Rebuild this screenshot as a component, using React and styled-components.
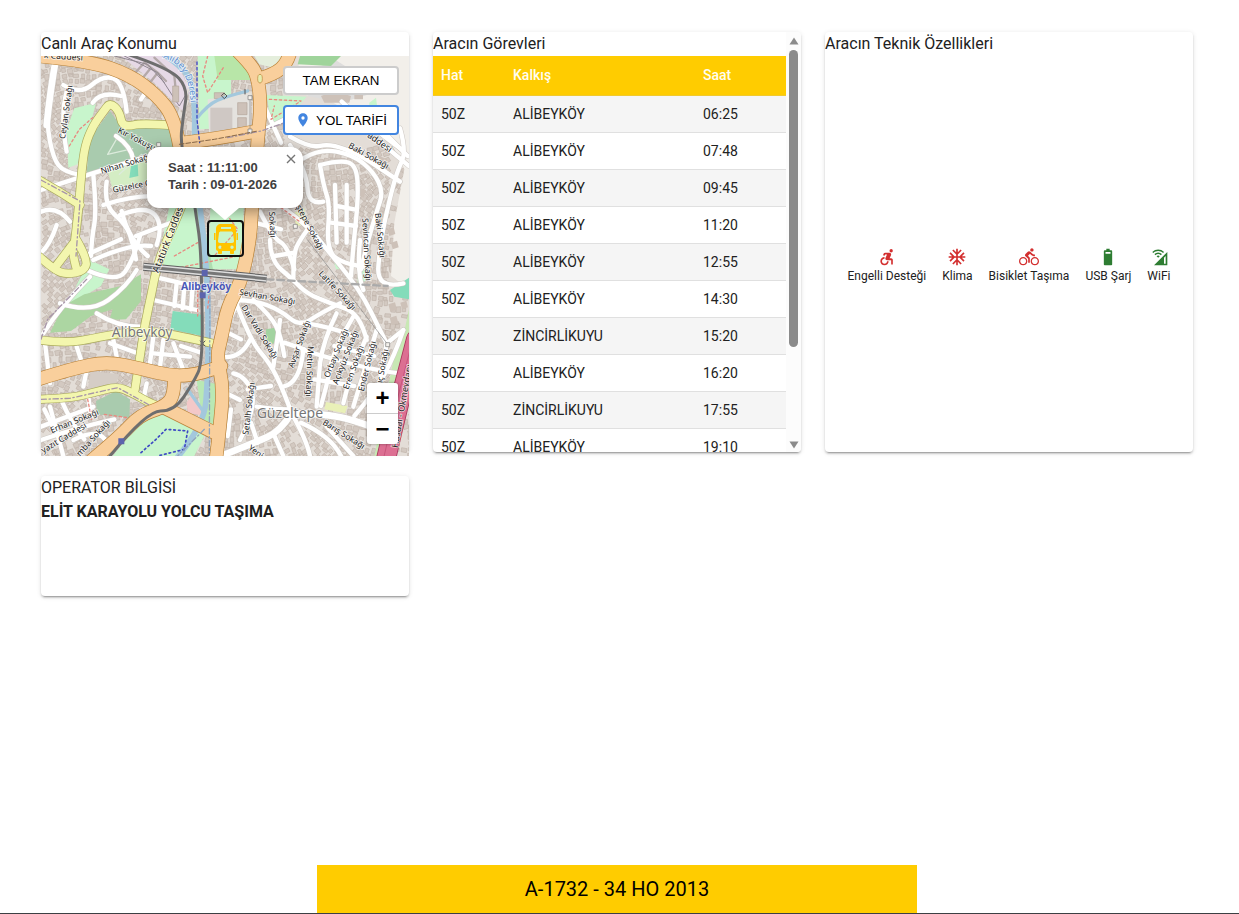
import React from "react";
import styled, { createGlobalStyle } from "styled-components";
import {
    MdAccessibleForward,
    MdAcUnit,
    MdDirectionsBike,
    MdBattery6Bar,
    MdCellWifi,
    MdLocationOn,
} from "react-icons/md";

const GlobalStyle = createGlobalStyle`
    * {
        box-sizing: border-box;
    }

    body {
        margin: 0;
        background: #fff;
        color: #212121;
        font-family: Roboto, "Liberation Sans", sans-serif;
        font-size: 16px;
        line-height: 24px;
    }
`;

const gorevler = [
    { hat: "50Z", kalkis: "ALİBEYKÖY", saat: "06:25" },
    { hat: "50Z", kalkis: "ALİBEYKÖY", saat: "07:48" },
    { hat: "50Z", kalkis: "ALİBEYKÖY", saat: "09:45" },
    { hat: "50Z", kalkis: "ALİBEYKÖY", saat: "11:20" },
    { hat: "50Z", kalkis: "ALİBEYKÖY", saat: "12:55" },
    { hat: "50Z", kalkis: "ALİBEYKÖY", saat: "14:30" },
    { hat: "50Z", kalkis: "ZİNCİRLİKUYU", saat: "15:20" },
    { hat: "50Z", kalkis: "ALİBEYKÖY", saat: "16:20" },
    { hat: "50Z", kalkis: "ZİNCİRLİKUYU", saat: "17:55" },
    { hat: "50Z", kalkis: "ALİBEYKÖY", saat: "19:10" },
];

const ozellikler = [
    { ad: "Engelli Desteği", icon: MdAccessibleForward, aktif: false },
    { ad: "Klima", icon: MdAcUnit, aktif: false },
    { ad: "Bisiklet Taşıma", icon: MdDirectionsBike, aktif: false },
    { ad: "USB Şarj", icon: MdBattery6Bar, aktif: true },
    { ad: "WiFi", icon: MdCellWifi, aktif: true },
];

function App() {
    return (
        <>
            <GlobalStyle />
            <StyledPage>
                <StyledGrid>
                    <Card>
                        <CardTitle>Canlı Araç Konumu</CardTitle>
                        <Harita />
                    </Card>
                    <Card>
                        <Gorevler />
                    </Card>
                    <Card>
                        <CardTitle>Aracın Teknik Özellikleri</CardTitle>
                        <Ozellikler />
                    </Card>
                    <Card $short>
                        <CardTitle>OPERATOR BİLGİSİ</CardTitle>
                        <Operator>ELİT KARAYOLU YOLCU TAŞIMA</Operator>
                    </Card>
                </StyledGrid>
                <StyledFooter>
                    <Plaka>A-1732 - 34 HO 2013</Plaka>
                </StyledFooter>
            </StyledPage>
        </>
    )
};

export default App

const StyledPage = styled.div`
    display: flex;
    flex-direction: column;
    min-height: 100vh;
`;

const StyledGrid = styled.main`
    display: grid;
    grid-template-columns: repeat(3, minmax(0, 1fr));
    align-items: start;
    gap: 24px;
    padding: 32px 46px 24px 41px;
`;

const Card = styled.section`
    display: flex;
    flex-direction: column;
    height: ${({ $short }) => ($short ? "120px" : "420px")};
    border-radius: 4px;
    background: #fff;
    box-shadow: 0 3px 1px -2px rgba(0, 0, 0, 0.2), 0 2px 2px 0 rgba(0, 0, 0, 0.14), 0 1px 5px 0 rgba(0, 0, 0, 0.12);
`;

const CardTitle = styled.h2`
    margin: 0;
    font-size: 16px;
    font-weight: 400;
    line-height: 24px;
`;

const Operator = styled.strong`
    font-weight: 700;
`;

const StyledFooter = styled.footer`
    display: flex;
    justify-content: center;
    margin-top: auto;
    padding-right: 5px;
    border-bottom: 1px solid #3c4043;
`;

const Plaka = styled.div`
    width: 600px;
    max-width: 100%;
    padding: 12px 16px;
    background: #ffcc00;
    color: #000;
    font-size: 20px;
    text-align: center;
`;

const StyledGorevler = styled.div`
    display: flex;
    height: 100%;
    overflow: hidden;
    border-radius: 4px;

    .content {
        flex: 1;
        min-width: 0;
    }
`;

const Table = styled.table`
    width: 100%;
    table-layout: fixed;
    border-collapse: separate;
    border-spacing: 0;
    font-size: 14px;
    line-height: 20px;

    th, td {
        padding: 8px;
        border-bottom: 1px solid #e0e0e0;
        text-align: left;
    }

    th {
        border-bottom-color: #f0c92f;
        background: #ffcc00;
        color: #fffdf0;
        font-weight: 500;
        line-height: 23px;
    }

    th:first-child {
        width: 72px;
    }

    th:last-child {
        width: 91px;
    }

    tbody tr:nth-child(odd) {
        background: #f5f5f5;
    }
`;

const ScrollBar = styled.div`
    display: flex;
    flex-direction: column;
    align-items: center;
    justify-content: space-between;
    width: 15px;
    padding: 5px 0 3px;
    background: #fcfcfc;

    .track {
        flex: 1;
        padding: 5px 0;
    }

    .thumb {
        width: 9px;
        height: 77%;
        border-radius: 5px;
        background: #8b8b8b;
    }
`;

function Gorevler() {
    return (
        <StyledGorevler>
            <div className="content">
                <CardTitle>Aracın Görevleri</CardTitle>
                <Table>
                    <thead>
                        <tr>
                            <th>Hat</th>
                            <th>Kalkış</th>
                            <th>Saat</th>
                        </tr>
                    </thead>
                    <tbody>
                        {gorevler.map((gorev) => (
                            <tr key={gorev.saat}>
                                <td>{gorev.hat}</td>
                                <td>{gorev.kalkis}</td>
                                <td>{gorev.saat}</td>
                            </tr>
                        ))}
                    </tbody>
                </Table>
            </div>
            <ScrollBar aria-hidden="true">
                <svg width="10" height="8" viewBox="0 0 10 8">
                    <path d="M5 0.5 9.5 7.5H0.5Z" fill="#8b8b8b" />
                </svg>
                <div className="track">
                    <div className="thumb" />
                </div>
                <svg width="10" height="8" viewBox="0 0 10 8">
                    <path d="M5 7.5 9.5 0.5H0.5Z" fill="#8b8b8b" />
                </svg>
            </ScrollBar>
        </StyledGorevler>
    )
};

const StyledOzellikler = styled.ul`
    display: flex;
    flex: 1;
    align-items: center;
    justify-content: center;
    gap: 16px;
    margin: 0;
    padding: 24px 0 0;
    list-style: none;
`;

const Ozellik = styled.li`
    display: flex;
    flex-direction: column;
    align-items: center;
    font-size: 12px;
    line-height: 18px;
    white-space: nowrap;

    svg {
        width: 20px;
        height: 20px;
        color: ${({ $aktif }) => ($aktif ? "#2e7d32" : "#d32f2f")};
    }
`;

function Ozellikler() {
    return (
        <StyledOzellikler>
            {ozellikler.map(({ ad, icon: Icon, aktif }) => (
                <Ozellik key={ad} $aktif={aktif}>
                    <Icon />
                    <span>{ad}</span>
                </Ozellik>
            ))}
        </StyledOzellikler>
    )
};

const StyledHarita = styled.div`
    position: relative;
    flex: none;
    height: 400px;
    overflow: hidden;
    background: #ebe6e0;
    font-family: "Liberation Sans", Arial, sans-serif;

    .map {
        display: block;
        width: 100%;
        height: 100%;
    }
`;

const MapActions = styled.div`
    position: absolute;
    top: 10px;
    right: 10px;
    display: flex;
    flex-direction: column;
    gap: 10px;
`;

const MapButton = styled.button`
    display: flex;
    align-items: center;
    justify-content: center;
    gap: 5px;
    width: 116px;
    height: ${({ $primary }) => ($primary ? "30px" : "29px")};
    padding: 0;
    border: 2px solid ${({ $primary }) => ($primary ? "#4285e0" : "#cccccc")};
    border-radius: 4px;
    background: #fff;
    color: #000;
    font-family: "Liberation Sans", Arial, sans-serif;
    cursor: pointer;

    svg {
        width: 16px;
        height: 16px;
        color: #4285e0;
    }
`;

const ZoomControl = styled.div`
    position: absolute;
    right: 11px;
    bottom: 12px;
    display: flex;
    flex-direction: column;
    border-radius: 3px;
    box-shadow: 0 0 3px rgba(0, 0, 0, 0.4);
    overflow: hidden;

    button {
        width: 31px;
        height: 31px;
        padding: 0;
        border: 0;
        border-bottom: 1px solid #ccc;
        background: #fff;
        color: #000;
        font: bold 24px/28px "Liberation Sans", Arial, sans-serif;
    }

    button:last-child {
        height: 30px;
        border-bottom: 0;
    }
`;

// marker and popup are anchored to the vehicle, which sits at the map centre
const Marker = styled.div`
    position: absolute;
    top: 164px;
    left: 50%;
    display: flex;
    align-items: center;
    justify-content: center;
    width: 37px;
    height: 37px;
    margin-left: -18px;
    border: 2px solid #101010;
    border-radius: 4px;
    color: #ffc400;
`;

const Popup = styled.div`
    position: absolute;
    top: 91px;
    left: 50%;
    width: 156px;
    height: 61px;
    margin-left: -78px;
    padding: 12px 21px;
    border-radius: 12px;
    background: #fff;
    box-shadow: 0 3px 14px rgba(0, 0, 0, 0.4);
    color: #404040;
    font-size: 13px;
    font-weight: 700;
    line-height: 17px;
    white-space: nowrap;

    &::after {
        content: "";
        position: absolute;
        top: 100%;
        left: 50%;
        margin-left: -14px;
        border: 14px solid transparent;
        border-top: 12px solid #fff;
        border-bottom: 0;
    }

    button {
        position: absolute;
        top: 0;
        right: 0;
        width: 24px;
        height: 24px;
        padding: 0;
        border: 0;
        background: none;
        color: #757575;
    }
`;

function OtobusIcon() {
    return (
        <svg width="24" height="30" viewBox="0 0 24 30" fill="currentColor" fillRule="evenodd">
            <path d="M7 0h10c3 0 5 2 5 5v20c0 1-1 2-2 2v2c0 .6-.4 1-1 1h-2c-.6 0-1-.4-1-1v-2H8v2c0 .6-.4 1-1 1H5c-.6 0-1-.4-1-1v-2c-1 0-2-1-2-2V5c0-3 2-5 5-5zM7 3v2h10V3zM5 9l-1 8c0 1 .6 2 2 2h12c1.400 0 2-1 2-2l-1-8c-.2-1-.8-1.500-2-1.500H7c-1.200 0-1.800.5-2 1.500zM6 21.500a1.700 1.700 0 1 0 0 3.400 1.700 1.700 0 0 0 0-3.400zM18 21.500a1.700 1.700 0 1 0 0 3.400 1.700 1.700 0 0 0 0-3.400z" />
            <path d="M0 9h1.500v7H0zM22.500 9H24v7h-1.500z" />
        </svg>
    )
};

function Harita() {
    return (
        <StyledHarita>
            <HaritaZemin />
            <Marker>
                <OtobusIcon />
            </Marker>
            <Popup>
                <div>Saat : 11:11:00</div>
                <div>Tarih : 09-01-2026</div>
                <button type="button" aria-label="Kapat">
                    <svg width="10" height="10" viewBox="0 0 10 10" stroke="currentColor" strokeWidth="1.4">
                        <path d="M1 1 9 9M9 1 1 9" />
                    </svg>
                </button>
            </Popup>
            <MapActions>
                <MapButton type="button">TAM EKRAN</MapButton>
                <MapButton type="button" $primary>
                    <MdLocationOn />
                    YOL TARİFİ
                </MapButton>
            </MapActions>
            <ZoomControl>
                <button type="button" aria-label="Yakınlaştır">+</button>
                <button type="button" aria-label="Uzaklaştır">−</button>
            </ZoomControl>
        </StyledHarita>
    )
};

// map geometry, drawn on a 1104 x 1200 sheet
const areas = [
    { fill: "#f2efea", d: "M777 0H1104V700L1050 660 1060 500 1090 340 1040 240 860 130 760 110Z" },
    { fill: "#dedddc", d: "M800 50 880 10 960 60 1000 110 900 140 800 120Z" },
    { fill: "#e6d9e6", d: "M240 0H400L440 90 425 165 340 80Z" },
    { fill: "#c8f5cc", d: "M470 0H570V215L475 220Z" },
    { fill: "#b8e6a8", d: "M520 0H615L627 72 530 72Z" },
    { fill: "#e4e2de", d: "M500 130 630 110V235L505 250Z" },
    { fill: "#cfc8c4", d: "M508 155H574V232H508Z" },
    { fill: "#c8f5cc", d: "M100 157 165 140 150 200 125 260 110 325 82 335 77 220Z" },
    { fill: "#a9cbae", d: "M207 165 242 215 392 215 400 275 325 280 315 320 137 355 145 250Z" },
    { fill: "#d4edc4", d: "M200 345 325 300 325 375 215 400Z" },
    { fill: "#84dcba", d: "M270 330 290 325 292 360 265 366Z" },
    { fill: "#9fd49b", d: "M777 0H900L870 30 770 25Z" },
    { fill: "#e4eedc", d: "M640 0H740L730 22 690 34 655 25Z" },
    { fill: "#c8f5cc", d: "M677 117 797 122 760 165 690 205Z" },
    { fill: "#c8f5cc", d: "M985 140 1005 125 1012 180 985 185Z" },
    { fill: "#c8f5cc", d: "M385 450H480V650L350 625Z" },
    { fill: "#c8f5cc", d: "M510 420H610L600 640 500 640Z" },
    { fill: "#aeddb0", d: "M465 460H480L520 660H480Z" },
    { fill: "#c8f5cc", d: "M147 612 205 640 180 690 80 750 110 680Z" },
    { fill: "#acd6a2", d: "M27 830 67 750 130 715 240 690 300 655 300 735 255 790 205 792 215 760 150 780 90 825Z" },
    { fill: "#84dcba", d: "M395 765 487 777 484 840 388 820Z" },
    { fill: "#a9cbae", d: "M165 1035 225 1005 267 1030 265 1085 168 1075Z" },
    { fill: "#d5cdc6", d: "M150 945 235 955 225 985 140 1000Z" },
    { fill: "#c8f5cc", d: "M300 1095 370 1075 470 1120 490 1140 460 1200H215Z" },
    { fill: "#b9e8b4", d: "M467 972 530 985 525 1110 485 1100Z" },
    { fill: "#f3c8c8", d: "M437 1040 455 1010 490 1080 440 1070Z" },
    { fill: "#a2d3a0", d: "M675 820 720 812 712 850 695 864 675 850Z" },
    { fill: "#e9f0b8", d: "M760 470 790 455 797 505 765 510ZM855 1038 920 1050 912 1072 850 1060Z" },
    { fill: "#c8f5cc", d: "M880 620 900 610 905 640 885 640ZM950 640 970 625 975 675 950 680Z" },
    { fill: "#84dcba", d: "M1047 702 1104 665V730L1060 722Z" },
    { fill: "#c8e8b4", d: "M1104 760 1085 850 1060 900 1000 1200H1050L1104 930Z" },
];

const streets = [
    "M47 -5 27 107 17 207 37 307 67 347 117 357",
    "M67 87 117 117 187 57 247 77 257 167",
    "M77 107 57 177 77 287",
    "M155 140 180 105 240 120",
    "M0 402 137 357 317 302",
    "M157 357 167 467 152 547 150 600",
    "M197 377 187 447 257 507 277 567 285 610",
    "M187 447 307 407 397 427",
    "M237 477 317 447 367 507 347 567",
    "M0 467 47 447 87 497",
    "M47 507 27 567 0 590",
    "M242 465 262 550 320 600",
    "M285 540 390 500",
    "M225 240 270 270 277 312",
    "M300 130 320 100",
    "M137 642 227 682 277 612 297 540",
    "M147 592 240 550",
    "M157 612 267 562 330 570",
    "M7 832 57 752 147 662",
    "M57 742 147 772 257 692 287 642",
    "M167 772 227 812 297 812",
    "M12 862 27 982",
    "M107 872 127 932",
    "M217 852 227 902",
    "M207 862 290 892",
    "M337 662 467 692",
    "M337 732 467 762",
    "M407 682 400 750",
    "M430 690 425 757",
    "M455 690 450 760",
    "M337 842 327 922",
    "M367 852 357 932",
    "M397 862 427 942",
    "M337 892 447 902",
    "M420 870 480 890",
    "M137 942 127 992",
    "M317 982 307 1032",
    "M140 1010 150 1080",
    "M0 1112 157 1052",
    "M0 1152 117 1112 220 1090",
    "M27 1052 67 1200",
    "M97 1152 177 1112 197 1160",
    "M60 1030 90 1100 130 1150",
    "M10 1060 40 1120",
    "M747 242 807 277 867 262 957 297 1017 337 1077 377",
    "M787 307 837 277 937 297 997 347 1027 407 1007 467 977 567 960 640",
    "M837 327 897 312 947 327 952 427 937 567 930 660",
    "M837 327 847 387 867 447 857 567 890 620 967 632",
    "M882 387 887 560",
    "M917 387 917 560",
    "M887 450 940 460",
    "M870 500 945 510",
    "M1077 217 1097 287 1067 347 1037 467 1017 567 1007 700 1087 682",
    "M902 137 960 190 1077 277",
    "M960 160 1100 300",
    "M1020 260 1104 330",
    "M747 267 797 347 802 447 847 437",
    "M727 455 797 507 847 567 957 702 1017 822 1037 862",
    "M657 467 697 547 740 570 760 640",
    "M640 500 720 520",
    "M677 217 737 187",
    "M670 150 720 260",
    "M687 552 687 612 757 672 797 712 867 742 957 772 977 852",
    "M757 672 757 592 777 552 800 520",
    "M700 600 760 590",
    "M582 732 627 852 687 922 727 1002 752 1072",
    "M577 732 637 732 717 762 777 812 837 772 897 742",
    "M637 732 690 780 720 840 730 900",
    "M787 882 777 982 727 992",
    "M717 792 697 932",
    "M730 860 790 880",
    "M837 922 827 1052",
    "M887 772 847 852 837 922",
    "M937 782 877 882 857 992 840 1050",
    "M977 842 927 952 907 1042",
    "M1007 822 967 952 937 1052",
    "M1037 862 1017 972",
    "M787 882 977 942 1077 952",
    "M880 870 1000 900",
    "M820 970 940 990",
    "M1087 822 1037 862",
    "M1087 822 1060 900 1000 1010 940 1080",
    "M957 552 947 652 967 702",
    "M780 800 860 810 940 840",
    "M537 902 597 912 627 852",
    "M577 952 617 962 647 1052 597 1152",
    "M557 1012 597 1032",
    "M597 722 557 812",
    "M560 830 600 850",
    "M752 1072 797 1152 807 1200",
    "M857 1112 937 1200",
    "M697 1132 727 1200",
    "M780 1100 870 1140 900 1200",
    "M647 1052 700 1060 740 1060",
    "M630 1100 650 1160",
    "M570 1060 560 1140",
    "M620 1000 690 990",
];

const wideStreets = [
    "M752 1072 717 1127 640 1160 540 1200",
    "M752 1072 857 1072 967 1102 1010 1120",
    "M47 -5 27 107 17 207",
];

const yellowRoads = [
    "M107 640 95 600 100 567 112 467 122 347 132 267 157 207 187 167 207 140 235 165 245 215 307 200 410 210",
    "M-10 370 57 407 117 447",
    "M-5 602 40 642 77 655 130 645 140 610 107 552",
    "M40 637 97 562",
    "M440 400 420 460 377 552 347 632 332 712 312 802 297 902 282 1000",
    "M-5 852 77 862 167 845 297 822 407 837 527 865",
    "M-5 1030 87 1027 167 1007 227 992 267 1007 337 1047 360 1052",
];

const orangeRoads = [
    "M-10 0 147 15 267 57 347 117 400 185 415 267",
    "M415 262 520 250 650 225",
    "M585 -20 625 20 650 60 660 150 650 250 645 340 632 460 627 552 600 680 560 750 540 850 527 902 547 992 537 1112 525 1210",
    "M650 70 700 55 740 20 750 -20",
    "M-10 970 97 937 197 917 297 937 397 962 487 952 540 930",
    "M400 965 400 1022 365 1055 297 1077 237 1142 150 1215",
    "M370 1055 440 1090 520 1130",
];

const river = "M365 -8 420 30 455 80 462 180 460 260 470 400 490 560 500 700 502 860 500 960 490 1110 400 1215";
const rail = "M260 -5 387 37 440 97 427 177 417 267 455 400 465 480 477 552 482 672 485 920 457 980 400 1065 317 1065 207 1200";

const labels = [
    ["k Caddesi", 8, 6, 4, 26],
    ["Ceylan Sokağı", 72, 250, -82, 25],
    ["Kır Yokuşu", 229, 229, 27, 25],
    ["Nihan Sokağı", 182, 354, -17, 25],
    ["Güzelce C", 217, 410, -11, 25],
    ["addesi", 977, 242, 35, 27],
    ["Baki Sokağı", 920, 274, 29, 25],
    ["Baki Sokağı", 1002, 472, 84, 25],
    ["Sevincan Sokağı", 964, 487, 87, 25],
    ["ştepe Sokağı", 764, 452, 62, 25],
    ["Sokağı", 684, 467, 87, 25],
    ["Atatürk Caddesi", 352, 652, -69, 29],
    ["Erhan Sokağı", 32, 1132, -22, 25],
    ["yazıt Caddesi", 7, 1192, -31, 25],
    ["mba Sokağı", 117, 1202, -48, 25],
    ["Sevhan Sokağı", 594, 716, 10, 25],
    ["Dar Vadi Sokağı", 600, 754, 58, 25],
    ["Latife Sokağı", 832, 654, 47, 25],
    ["Setalh Sokağı", 622, 1137, -83, 25],
    ["Avşar Sokağı", 757, 937, -70, 25],
    ["Metin Sokağı", 800, 870, 92, 25],
    ["Orbay Sokağı", 864, 967, -68, 25],
    ["Açıkyüz Sokağı", 890, 987, -69, 25],
    ["Eren Sokağı", 922, 1002, -70, 25],
    ["Ender Sokağı", 968, 1007, -76, 25],
    ["ıç Sokağı", 1024, 982, -80, 25],
    ["Barış Sokağı", 843, 1104, 32, 25],
    ["Yeni", 620, 1180, 35, 25],
    ["Hasdal - Okmeydanı", 1070, 1177, -80, 27],
];

// scatters small blocks over the sheet, always the same way
function buildingPath() {
    const parts = [];
    let seed = 7;
    const next = () => {
        seed = (seed * 16807) % 2147483647;
        return seed / 2147483647;
    };
    for (let y = 0; y < 1200; y += 17) {
        for (let x = 0; x < 1104; x += 18) {
            const w = 9 + next() * 10;
            const h = 9 + next() * 8;
            const a = Math.sin(x / 260) + Math.cos(y / 210) + next() * 0.3;
            const px = x + next() * 6;
            const py = y + next() * 6;
            const skip = next() < 0.14 || (x > 720 && y < 270) || (x > 1030 && next() < 0.6);
            if (skip) continue;
            const ux = Math.round(Math.cos(a) * w);
            const uy = Math.round(Math.sin(a) * w);
            const vx = Math.round(-Math.sin(a) * h);
            const vy = Math.round(Math.cos(a) * h);
            parts.push(`M${Math.round(px)} ${Math.round(py)}l${ux} ${uy}l${vx} ${vy}l${-ux} ${-uy}z`);
        }
    }
    return parts.join("");
}

// rounds the corners of a polyline by curving through the middle of each leg
function smooth(d) {
    const n = d.match(/-?\d+/g).map(Number);
    let out = `M${n[0]} ${n[1]}`;
    for (let i = 2; i < n.length - 2; i += 2) {
        const last = i === n.length - 4;
        const ex = last ? n[i + 2] : (n[i] + n[i + 2]) / 2;
        const ey = last ? n[i + 3] : (n[i + 1] + n[i + 3]) / 2;
        out += `Q${n[i]} ${n[i + 1]} ${ex} ${ey}`;
    }
    return n.length === 4 ? d : out;
}

const buildings = buildingPath();

const MapSheet = styled.svg`
    .road {
        fill: none;
        stroke-linejoin: round;
        stroke-linecap: round;
    }

    .label {
        fill: #222;
        stroke: rgba(255, 255, 255, 0.7);
        stroke-width: 5px;
        paint-order: stroke;
        font-family: "Noto Sans", sans-serif;
    }

    .place {
        fill: #777;
    }

    .station {
        fill: #4a58b8;
        font-weight: 700;
    }

    .river-name {
        fill: #5f8fd0;
    }
`;

function Roads({ paths, color, width }) {
    return paths.map((d) => <path key={d} className="road" d={smooth(d)} stroke={color} strokeWidth={width} />)
};

function HaritaZemin() {
    return (
        <MapSheet className="map" viewBox="0 0 1104 1200" preserveAspectRatio="xMidYMid slice">
            <rect width="1104" height="1200" fill="#e3ddd7" />
            <path d={buildings} fill="#d3c9c1" stroke="#c0b4aa" strokeWidth="2" />
            {areas.map((area) => <path key={area.d} d={area.d} fill={area.fill} />)}

            {/* depot sidings and the pale grounds beside the highway */}
            <path className="road" d="M265 70 310 20 350 50M290 85 330 35M315 95 350 50 375 75M340 5 400 60 405 110" stroke="#b4a9a9" strokeWidth="7" />
            <path className="road" d="M250 0 350 50 395 120 415 150 432 120M220 0 320 25 370 80" stroke="#8f8791" strokeWidth="3" />
            <path d="M395 90h18v48h-18zM520 110h30v18h-30zM590 140h28v36h-28zM590 185h26v30h-26z" fill="#cdc1b8" stroke="#b3a69b" strokeWidth="2" />
            <path d="M840 120 880 105 930 120 925 140 850 140ZM940 110h26v20h-26zM830 345l28 8-3 12-28-8zM850 385l26 6-3 12-26-6zM955 395l20 8-7 22-18-8zM1015 300l24 10-6 16-24-10z" fill="#cdc1b8" />
            <path d="M1010 590l22-10 8 22-22 10zM1042 745l20-6 6 22-20 6zM1046 785l20-6 6 22-20 6zM1078 740l18-6 5 20-18 6zM1040 520l18-6 5 20-18 6zM1050 560l18-6 5 20-18 6z" fill="#cdc1b8" />
            <path className="road" d="M235 355 302 295M200 295 232 240M200 295 275 278" stroke="#dcebdc" strokeWidth="4" />

            <Roads paths={[river]} color="#a3c8dd" width={17} />
            <Roads paths={["M465 190 500 145 560 120 620 105", "M440 1000 475 1050 490 1070"]} color="#a3c8dd" width={10} />

            <Roads paths={streets} color="#cdc8c3" width={16} />
            <Roads paths={wideStreets} color="#cdc8c3" width={23} />
            <Roads paths={streets} color="#ffffff" width={13} />
            <Roads paths={wideStreets} color="#ffffff" width={20} />
            <Roads paths={yellowRoads} color="#a9a95c" width={27} />
            <Roads paths={yellowRoads} color="#f3f6ae" width={23} />
            <Roads paths={orangeRoads} color="#b98237" width={42} />
            <Roads paths={orangeRoads} color="#f9cf9c" width={38} />
            <ellipse cx="657" cy="68" rx="7" ry="13" fill="#e6eeb0" stroke="#b98237" strokeWidth="2" />

            {/* highway at the eastern edge */}
            <Roads paths={["M1125 850 1075 1030 1035 1210"]} color="#a8365c" width={60} />
            <Roads paths={["M1125 850 1075 1030 1035 1210"]} color="#dc6f92" width={55} />
            <Roads paths={["M1115 850 1067 1030 1027 1210"]} color="#c8557c" width={3} />

            {/* paths, borders and power lines */}
            <path className="road" d="M468 18V190L476 260" stroke="#3d49c4" strokeWidth="4" strokeDasharray="8 8" />
            <path className="road" d="M500 0 485 60 500 110 550 30M685 130 780 135 740 160 690 190 700 150M720 455 780 500M530 440 590 520 520 600M400 600 470 560M390 640 590 600" stroke="#e88a80" strokeWidth="4" strokeDasharray="7 8" />
            <path className="road" d="M85 270 115 220 155 185M190 1075 260 1085M140 1030 152 1090M510 660 500 760M470 700V780" stroke="#e88a80" strokeWidth="4" strokeDasharray="7 8" />
            <path className="road" d="M300 1190 345 1150 375 1120 440 1125 430 1180 350 1200" stroke="#3d49c4" strokeWidth="5" strokeDasharray="5 9" />
            <path className="road" d="M0 372 117 435 105 600M0 850 20 790 137 670M0 1030 87 1027 230 995 330 1050M560 245 660 225 760 190 800 160" stroke="#a795a8" strokeWidth="4" strokeDasharray="16 8 4 8" />
            <path className="road" d="M507 650 505 1190M490 1120 400 1210" stroke="#8fa3bd" strokeWidth="4" strokeDasharray="16 8 4 8" />
            <path className="road" d="M627 125V230M800 552 1040 865" stroke="#888" strokeWidth="2" />
            <path d="M621 119h12v12h-12zM621 219h12v12h-12zM757 505h12v12h-12zM1034 860h12v12h-12zM347 260h12v12h-12z" fill="#f4f1ec" stroke="#777" strokeWidth="2" />
            <path className="road" d="M550 112 558 120 550 128 542 120ZM478 855 492 870M492 855 478 870M612 100v14" stroke="#555" strokeWidth="3" />

            <Roads paths={[rail]} color="#6e6e6e" width={9} />
            <path className="road" d="M415 265 520 250 650 225" stroke="#8b6b4a" strokeWidth="3" strokeDasharray="14 6" />
            <path className="road" d="M677 670 1040 690" stroke="#aaa" strokeWidth="7" strokeDasharray="20 12" />
            <path d="M307 632 567 657 677 668" fill="none" stroke="#5f5f5f" strokeWidth="24" />
            <path d="M307 632 567 657 677 668" fill="none" stroke="#dedede" strokeWidth="18" />
            <path d="M307 632 567 657 677 668" fill="none" stroke="#777" strokeWidth="9" />
            <path d="M482 642h18v18h-18zM476 709h18v18h-18zM232 1147h18v18h-18z" fill="#5c64ad" />

            {labels.map(([text, x, y, angle, size]) => (
                <text key={text + x} className="label" fontSize={size} transform={`translate(${x} ${y}) rotate(${angle})`}>
                    {text}
                </text>
            ))}
            <path id="dere" d="M366 6 C420 20 436 60 444 100 S448 170 452 200" fill="none" />
            <text className="label river-name" fontSize="28">
                <textPath href="#dere">Alibey Deresi</textPath>
            </text>
            <text className="label place" x="212" y="842" fontSize="41">Alibeyköy</text>
            <text className="label place" x="647" y="1085" fontSize="42">Güzeltepe</text>
            <text className="label station" x="420" y="702" fontSize="31">Alibeyköy</text>
        </MapSheet>
    )
};
